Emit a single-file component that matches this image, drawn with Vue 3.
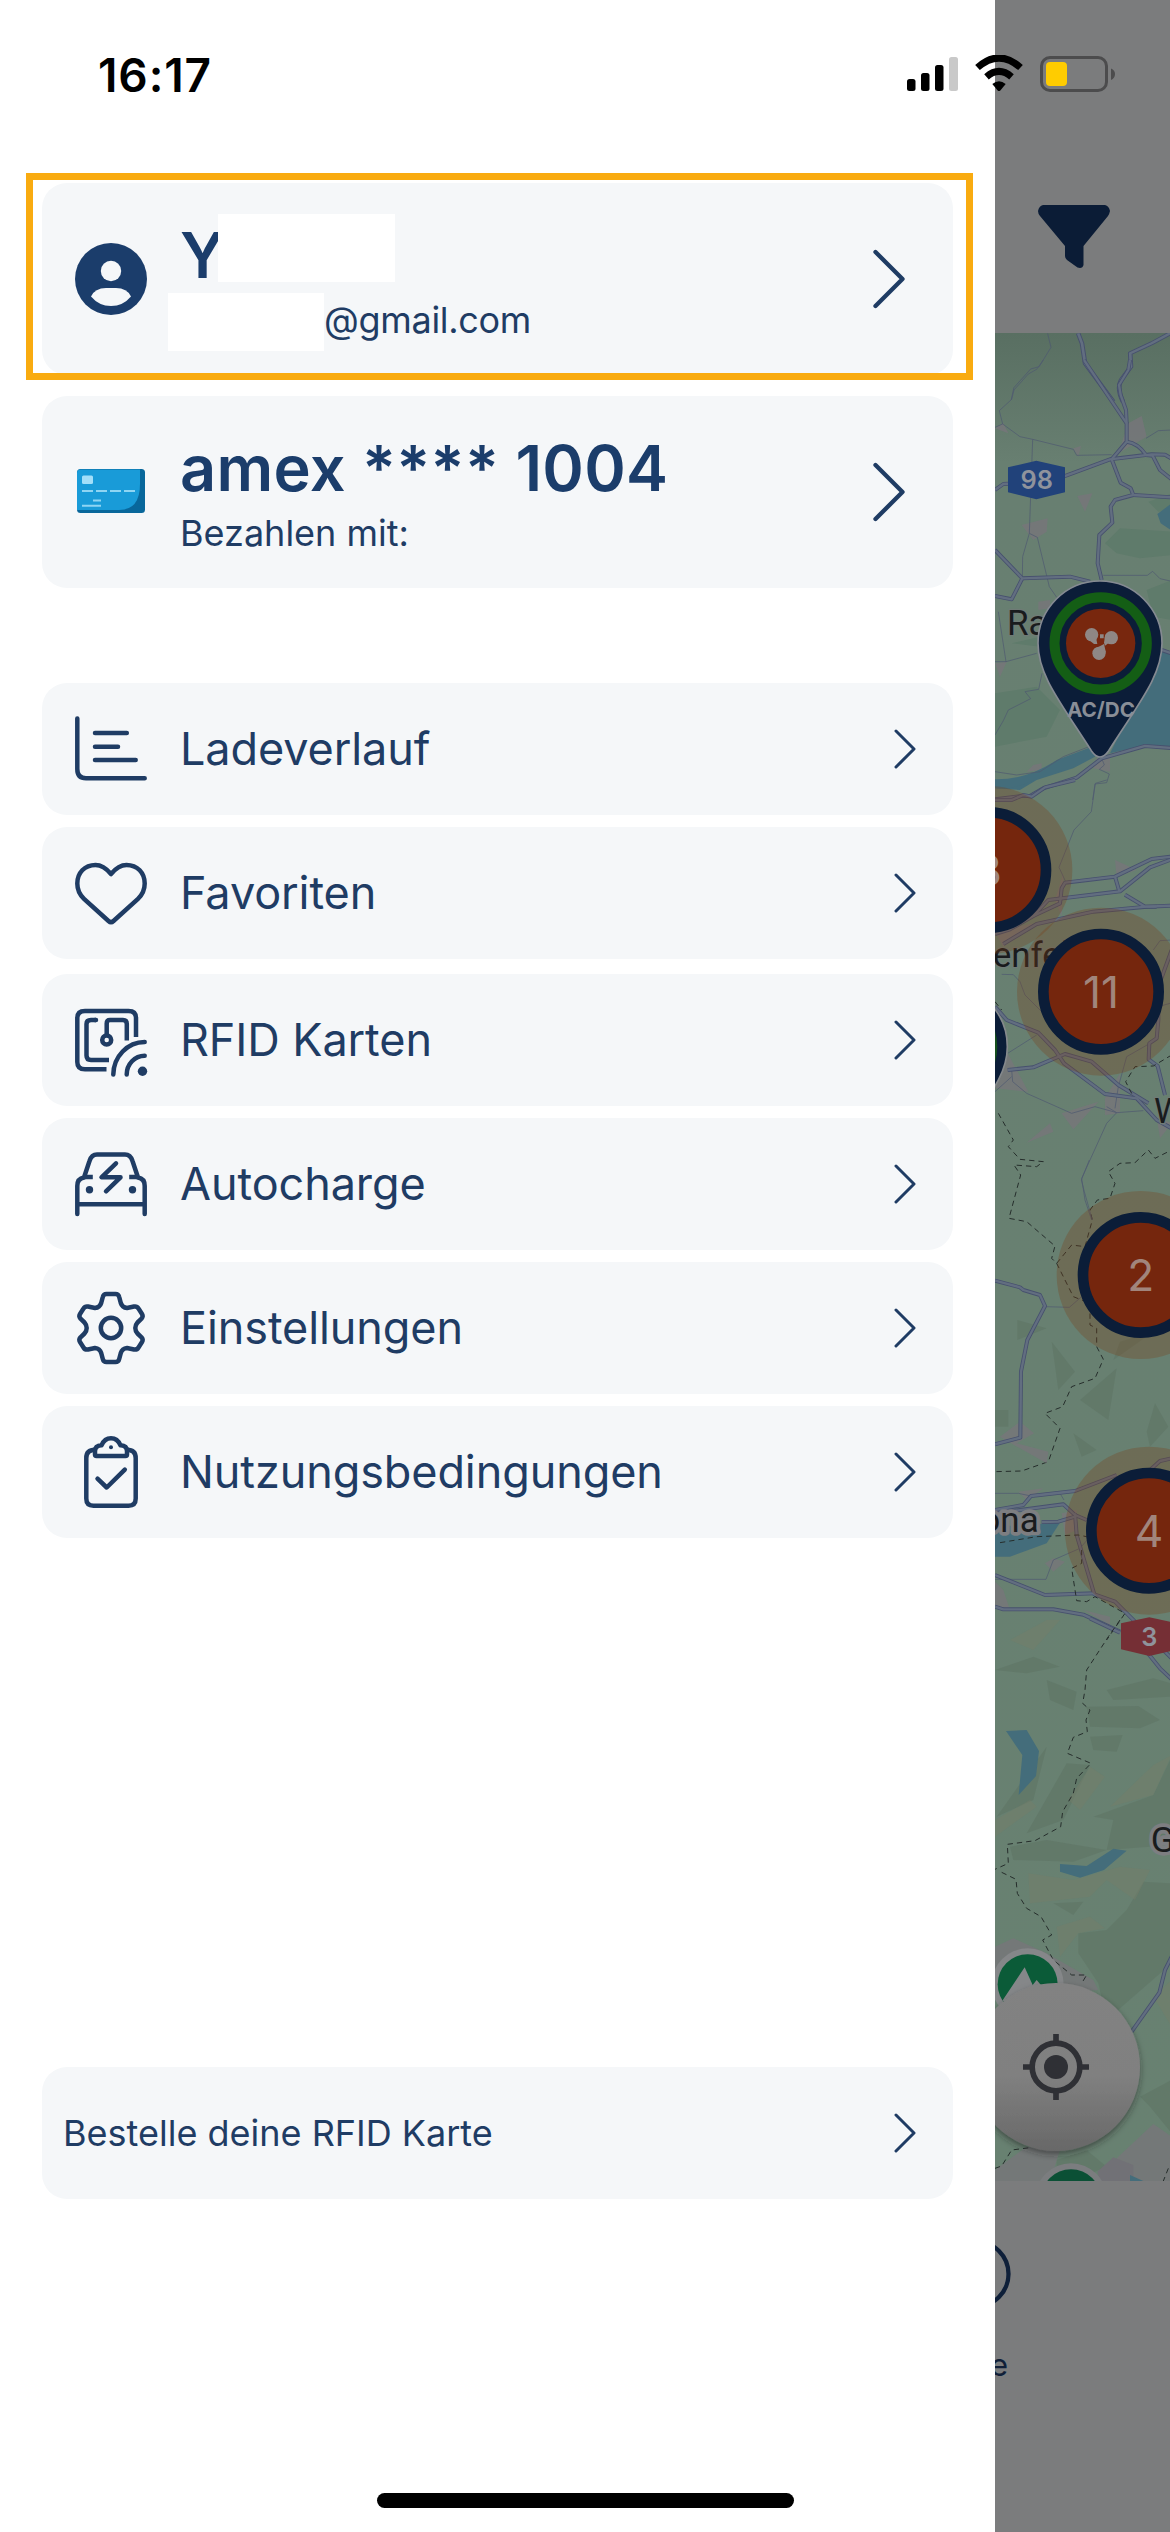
<script setup>
const menu = [
  { id: 'chart', label: 'Ladeverlauf' },
  { id: 'heart', label: 'Favoriten' },
  { id: 'rfid', label: 'RFID Karten' },
  { id: 'car', label: 'Autocharge' },
  { id: 'gear', label: 'Einstellungen' },
  { id: 'clipboard', label: 'Nutzungsbedingungen' },
]

const topRoads = [
  'M672 0 L800 190 L800 245 L755 298 L782 368 L812 385 L820 405 L765 420 L752 440 L757 488 L718 525 L713 610 L725 660',
  'M810 0 L805 30 L777 75 L782 105 L798 150 L800 190',
  'M405 390 L430 372 L500 368 L610 350 L750 298 L875 283 L915 284 L935 296',
  'M800 245 Q835 250 858 285 L878 287 L900 330 L935 358',
  'M820 405 L935 412',
  'M405 570 L487 655 L630 650 L690 665',
  'M487 655 L455 718 L405 708',
  'M905 870 L935 880',
  'M405 1318 L485 1308 L510 1308 L550 1285 L650 1253 L725 1195 L855 1158 L935 1164',
]
const topTracks = [
  'M550 0 L530 28 L505 42 L462 90 L455 118 L418 152 L428 192 L480 230 L518 238 L640 268 L650 286 L755 284',
  'M405 202 L428 192', 'M518 238 L508 520 L488 590 L487 655', 'M508 520 L532 532 L568 680 L590 712',
  'M858 235 L895 212 L935 210', 'M730 646 L862 646 L878 634 L900 656 L935 664',
  'M415 755 L438 905 L530 880', 'M405 905 L438 905', 'M546 940 L536 988 L495 995 L512 1016 L445 1050 L430 1082 L405 1125',
  'M405 1235 L470 1245 L540 1235 L610 1190 L700 1155', 'M725 1195 L733 1215 L718 1228 L748 1242 L740 1268 L705 1272 L698 1320',
]
const midRoads = [
  'M405 60 L455 60 L490 45 L515 50 L555 22 L645 0',
  'M405 462 L450 448 L520 408 L600 370 L605 325 L615 308 L765 290 L875 237 L935 230',
  'M430 492 L530 432 L700 395 L860 380 L935 377', 'M520 408 L565 360 L780 334 L870 262 L935 238',
  'M765 290 L778 334', 'M795 344 L855 380 L890 380', 'M405 680 L440 720 L535 758 L585 810 L612 850 L735 942 L830 955 L890 1020 L935 1045',
  'M443 870 L520 862 L615 822 L695 845 L775 915 L865 970', 'M935 510 L895 620 L895 720 L890 775 L868 790 L866 838 L893 858 L915 945',
]
const midTracks = [
  'M740 0 L706 10 L694 95 L642 150 L597 262 L617 305', 'M425 583 L460 584 L480 605 L495 645 L570 720',
  'M443 820 L530 765', 'M455 870 L458 905 L500 940 L635 1000 L705 980 L770 998 L850 992', 'M740 980 L770 998 L740 1030 L665 1195 L675 1260 L695 1320',
  'M405 935 L455 890', 'M935 480 L900 482 L880 510', 'M930 670 L895 680', 'M870 790 L800 830 L775 920 L765 985',
]
const lowRoads = [
  'M405 362 L480 382 L490 390 L540 405 L555 438 L502 540 L483 635 L481 833 L405 853',
  'M405 1050 L490 1035 L513 1008 L645 993 L770 945', 'M405 1060 L610 1033 L645 1065 L680 1080', 'M545 1086 L595 1085 L645 1070',
  'M645 1060 L650 1125 L703 1303 L765 1325 L825 1385', 'M405 1245 L555 1305 L703 1300',
  'M405 1340 L430 1348 L580 1348 L670 1364 L780 1415', 'M870 930 L900 903 L935 895',
]
const lowTracks = [
  'M555 440 L628 442 L665 410', 'M688 0 L664 60 L673 95 L697 180', 'M405 1000 L475 1000 L513 1008',
  'M405 1258 L558 1258 L580 1200 L660 1165 L690 1130', 'M600 1000 L612 1020',
]
const clusters = [
  { x: 385, y: 270, n: '8' },
  { x: 723, y: 635, n: '11' },
  { x: 842, y: 1485, n: '2' },
  { x: 867, y: 2252, n: '4' },
]
</script>

<template>
  <main class="screen">
    <aside class="drawer">
      <section class="cards">
        <div class="card tall account">
          <svg class="icon" viewBox="0 0 72 72">
            <circle cx="36" cy="36" r="36" fill="#1b3d6b" />
            <ellipse cx="36" cy="28" rx="10.2" ry="10.2" fill="#f5f7f9" />
            <path d="M16 53.5 Q20 45 31 45 H41 Q52 45 56 53.5 Q48 63 36 63 T16 53.5Z" fill="#f5f7f9" />
          </svg>
          <div class="lines">
            <strong class="title">Y<i class="mask"></i></strong>
            <span class="sub email"><i class="mask"></i>@gmail.com</span>
          </div>
          <svg class="chevron big" viewBox="0 0 32 60"><path d="M2.5 3 L29.5 30 L2.5 57" /></svg>
        </div>
        <div class="card tall">
          <svg class="icon" viewBox="0 0 72 72">
            <rect x="2" y="13" width="68" height="44" rx="3.5" fill="#08679b" />
            <path d="M5 13.5 H65 V28 Q65 54 44 54 H2 V17 Q2 13.500 5 13.500Z" fill="#199bd8" />
            <rect x="7" y="19.500" width="11" height="8.500" rx="1.500" fill="#a3dff9" />
            <path d="M7 35H18M21 35H32M35 35H46M49 35H60M18 44.500H26M7 49.700H26" stroke="#8fd5f3" stroke-width="2" />
          </svg>
          <div class="lines">
            <strong class="title amex">amex **** 1004</strong>
            <span class="sub">Bezahlen mit:</span>
          </div>
          <svg class="chevron big" viewBox="0 0 32 60"><path d="M2.5 3 L29.5 30 L2.5 57" /></svg>
        </div>
      </section>

      <nav class="menu">
        <a v-for="item in menu" :key="item.id" class="card" :class="item.id">
          <svg class="icon line" viewBox="0 0 72 72">
            <path v-if="item.id === 'chart'" d="M2.300 5.500V56Q2.300 65.300 11 65.300H69.700M20 20H51.800M20 33.700H43M20 47H60.700" />
            <path v-else-if="item.id === 'heart'" d="M36 17C31 11 26.500 8 20.500 8C9.500 8 2.300 16 2.300 26.500C2.300 34 5.500 38.500 9 41.800L33.500 64Q36 66.300 38.500 64L63 41.800C66.500 38.500 69.700 34 69.700 26.500C69.700 16 62.500 8 51.500 8C45.500 8 41 11 36 17Z" />
            <g v-else-if="item.id === 'rfid'" stroke-linecap="butt">
              <path d="M31.500 65.300H10Q2.300 65.300 2.300 58V14Q2.300 7 10 7H53.500Q61 7 61 14V33M34 56H16Q11.500 56 11.500 51.500V20Q11.500 16 16 16H21M31.700 31V19.500Q31.700 16 35 16H48Q51.800 16 51.800 20V36.500" />
              <circle cx="31.700" cy="36" r="4.500" />
              <path d="M20 16H21M69.700 38A31.500 33 0 0 0 38.300 70.500M69.700 51.800A18 18.700 0 0 0 51.700 70.500" stroke-linecap="round" />
              <circle class="dot" cx="67.500" cy="67.300" r="4.700" />
            </g>
            <g v-else-if="item.id === 'car'">
              <path d="M2.300 66V38Q2.300 30.500 9 29.500L14.500 13Q16.500 6.500 22 6.500H50Q55.500 6.500 57.500 13L63 29.500Q69.700 30.500 69.700 38V66M2.300 56.300H69.700" />
              <path d="M9 29H17.800M54.200 29H63" stroke-linecap="butt" />
              <path d="M41 15.300L26.500 29.300H45.500L31 43.300" />
              <circle class="dot" cx="14.500" cy="41.700" r="3.700" /><circle class="dot" cx="57.500" cy="41.700" r="3.700" />
            </g>
            <g v-else-if="item.id === 'gear'">
              <path d="M31.500 2H40.500Q43.500 2 44.200 5L45.800 11Q47.200 15.500 52 16L59 14.500Q62 14 63.500 16.500L67 22Q68.500 24.500 66.500 26.700L62.500 30.500Q60.300 33 60.300 36T62.500 41.500L66.500 45.300Q68.500 47.500 67 50L63.500 55.500Q62 58 59 57.500L52 56Q47.200 56.500 45.800 61L44.200 67Q43.500 70 40.500 70H31.500Q28.500 70 27.800 67L26.200 61Q24.800 56.500 20 56L13 57.500Q10 58 8.500 55.500L5 50Q3.500 47.500 5.500 45.300L9.500 41.500Q11.700 39 11.700 36T9.500 30.500L5.500 26.700Q3.500 24.500 5 22L8.500 16.500Q10 14 13 14.500L20 16Q24.800 15.500 26.200 11L27.800 5Q28.500 2 31.500 2Z" />
              <circle cx="36" cy="36" r="10.200" />
            </g>
            <g v-else>
              <path d="M20 13.700Q11.300 13.700 11.300 22V62.500Q11.300 69.700 18.500 69.700H53.500Q60.700 69.700 60.700 62.500V22Q60.700 13.700 52 13.700" />
              <path d="M20 18.500V15Q20 9.800 26.500 9.300Q29.500 2.300 36 2.300T45.500 9.300Q52 9.800 52 15V18.500Q52 20 50.500 20H21.500Q20 20 20 18.500ZM22.500 42.700L31.700 51.500L49.800 33.700" />
              <circle class="dot" cx="36" cy="11.300" r="2" />
            </g>
          </svg>
          <span class="label">{{ item.label }}</span>
          <svg class="chevron" viewBox="0 0 22 40"><path d="M2 2 L20 20 L2 38" /></svg>
        </a>
      </nav>

      <a class="card order">
        <span class="order-label">Bestelle deine RFID Karte</span>
        <svg class="chevron" viewBox="0 0 22 40"><path d="M2 2 L20 20 L2 38" /></svg>
      </a>
    </aside>

    <section class="backdrop">
      <header class="toolbar">
        <svg class="filter" viewBox="0 0 72 63"><path d="M5 0H67Q71 1 72 6Q71.500 8.500 70 11L45.500 41V60Q44.500 64 39.500 62.500L29 55Q27 53.500 27 51V41L2 11Q0 8.500 0 6Q1 1 5 0Z" fill="#0b1c36" /></svg>
      </header>

      <svg class="map" viewBox="995 333 175 1848">
        <defs>
          <linearGradient id="land" x1="0" y1="0" x2="0" y2="1">
            <stop offset="0" stop-color="#596f62" /><stop offset=".07" stop-color="#687f71" /><stop offset="1" stop-color="#688171" />
          </linearGradient>
          <linearGradient id="fab" x1="0" y1="0" x2="0" y2="1">
            <stop offset="0" stop-color="#828282" /><stop offset=".55" stop-color="#808080" /><stop offset="1" stop-color="#686868" />
          </linearGradient>
          <filter id="shade" x="-20%" y="-20%" width="140%" height="140%"><feDropShadow dx="0" dy="10" stdDeviation="9" flood-color="#222" flood-opacity=".5" /></filter>
        </defs>
        <rect x="995" y="333" width="175" height="1848" fill="url(#land)" />

        <g transform="translate(570 0) scale(.38265 .33333)">
          <path class="track" d="M1248 1000 L1257 1042 L1226 1100 L1204 1107 L1160 1163 L1153 1200" />
          <path class="road" d="M1328 1000 L1338 1030 L1346 1090 L1420 1205 M1568 1000 L1520 1030 L1464 1060 L1466 1100 L1440 1140 Q1428 1165 1445 1205" />
          <path class="road core" d="M1328 1000 L1338 1030 L1346 1090 L1420 1205 M1568 1000 L1520 1030 L1464 1060 L1466 1100 L1440 1140 Q1428 1165 1445 1205" />
        </g>

        <!-- northern area -->
        <g transform="translate(860 360) scale(.33333)">
          <path class="wood" d="M735 550L780 505L935 515V585L840 595L770 580ZM865 425L935 400V450L895 455ZM405 1000L530 980L600 1050L560 1130L405 1160ZM860 690L935 660V780L880 770ZM455 850L540 830V860Z" />
          <path class="town" d="M805 190L845 168L860 230L775 280ZM640 265L663 258L655 290ZM652 408L697 400L675 455ZM485 495L563 475L560 515L520 540ZM405 205L430 190L445 220ZM405 910L440 905L420 950ZM710 1195L750 1195L750 1235L700 1225ZM520 1215L545 1210V1230L500 1235ZM535 725L570 720V745L535 750Z" />
          <path class="water" d="M935 430L892 462L902 490L935 512ZM905 870L935 885V1160L860 1155L750 1180ZM405 1258Q500 1260 590 1200L710 1155L705 1190L640 1225L530 1260L480 1290L405 1285Z" />
          <path v-for="d in topTracks" :key="d" class="track" :d="d" />
          <path v-for="d in topRoads" :key="d" class="road" :d="d" />
          <path v-for="d in topRoads" :key="'c' + d" class="road core" :d="d" />
          <path d="M444 322L529 302L615 322V397L529 418L444 397Z" fill="#21427a" />
          <text class="badge" x="530" y="388" font-size="76">98</text>
          <text class="place" x="441" y="825" font-size="105">Radolf</text>
        </g>

        <!-- central area -->
        <g transform="translate(860 780) scale(.33333)">
          <path class="water" d="M405 0H520Q470 28 405 25Z" />
          <path class="town" d="M765 240L830 270L770 290ZM500 1088L570 1030L580 1055ZM605 1000L715 965L640 1048ZM735 955L780 880V1000L735 1005ZM443 820L505 935L405 925ZM890 1010L935 1030L900 1075ZM405 455L520 430L430 500ZM585 360L610 280L605 410Z" />
          <path v-for="d in midTracks" :key="d" class="track" :d="d" />
          <path v-for="d in midRoads" :key="d" class="road" :d="d" />
          <path v-for="d in midRoads" :key="'c' + d" class="road core" :d="d" />
          <path class="border" d="M405 665L425 690M415 1000L460 1080L445 1100L480 1138L550 1145L530 1160L462 1155L482 1185L447 1315L500 1325L585 1398L575 1435L590 1450L635 1395L675 1400L697 1320L690 1290L712 1260L750 1255L765 1210L745 1175L780 1150L825 1148L865 1110L885 1135L935 1110M590 1450L640 1550L690 1570L690 1635L710 1645V1700L730 1738L705 1795L635 1820L608 1880L555 1900L600 1945L565 2045L485 2073L405 2075M935 825L880 858L825 860L797 905L820 950" />
          <text class="place" x="398" y="562" font-size="105">enfeld</text>
          <text class="place" x="882" y="1030" font-size="105">W</text>
        </g>

        <!-- foothills -->
        <g transform="translate(860 1160) scale(.33333)">
          <path class="ridge" d="M575 545L645 635L595 690ZM472 480L560 505L472 540ZM660 720L770 625L745 780ZM640 820L710 870L665 890ZM860 815L885 730L925 800L870 860ZM780 545L880 515L760 600ZM405 750H445V800H405Z" />
          <path class="town" d="M420 830L480 785L522 820L470 850L565 875L560 910L450 848ZM475 995L550 985L500 1020ZM605 1060L650 1050V1110L615 1125ZM555 1210L580 1195L615 1205L580 1235ZM405 1265L430 1290L450 1350L405 1345ZM670 1350L750 1370V1395Z" />
          <path class="water" d="M405 1100L600 1088L560 1150L450 1190H405Z" />
          <path v-for="d in lowTracks" :key="d" class="track" :d="d" />
          <path v-for="d in lowRoads" :key="d" class="road" :d="d" />
          <path v-for="d in lowRoads" :key="'c' + d" class="road core" :d="d" />
          <path class="border" d="M420 1148L530 1130L655 1125L680 1130M665 1170L665 1210L635 1225L650 1322L680 1325L705 1310L795 1360L740 1440" />
          <text class="place halo" x="536" y="1117" font-size="105" text-anchor="end">Altona</text>
        </g>

        <!-- mountains -->
        <g transform="translate(860 1620) scale(.33333)">
          <path class="ridge" d="M560 180L650 215L640 270L570 240ZM405 150L520 110L600 140L500 160ZM680 260L835 258L900 300L840 325L690 320ZM690 350L788 345L770 395L700 390ZM740 210L880 175L935 190V230L760 240ZM450 680L560 660L740 690L640 725L460 720ZM700 590L880 525L935 410V640L870 680L740 690L760 600ZM850 785L935 790V1030L740 1200L715 1090L655 1000V940L740 930L800 870ZM500 640L620 430L690 435L610 600ZM410 590L560 380L520 540ZM580 850L670 845L640 885Z" />
          <path class="sand" d="M625 540L690 440L735 470L660 570ZM750 560L880 435L935 405L880 525ZM505 760L640 780L780 740L870 750L825 840L740 780L690 830L510 850ZM590 920L690 890L735 925L655 940L600 1010ZM405 600L510 540L530 560L405 650ZM880 1130L935 1080V1220ZM450 60L560 0H600L520 90Z" />
          <path class="town" d="M405 980L460 955L560 1000L700 1080L715 1110L600 1120L405 1050Z" />
          <path class="water" d="M438 333L500 330L537 393L528 468L476 525L487 405ZM600 732L680 738L760 686L800 692L732 750L660 773L600 755Z" />
          <path class="road" d="M690 -5L780 38M860 95L900 145L935 178M935 1010L915 1050L898 1118L815 1235M880 60L935 115" />
          <path class="road core" d="M690 -5L780 38M860 95L900 145L935 178M935 1010L915 1050L898 1118L815 1235M880 60L935 115" />
          <path class="border" d="M780 0L745 50L680 150L675 210L668 250L690 270L678 300L682 335L640 352L622 400L693 430L650 475L640 520L608 575L602 620L525 662L442 673L445 730L405 748M425 757L468 778L472 820L500 865L543 890L575 945L548 960L580 1020L635 1065H680L665 1090" />
          <path d="M783 10L868 -8L953 10V88L868 108L783 88Z" fill="#752f35" />
          <text class="badge" x="868" y="78" font-size="76">3</text>
          <text class="place halo" x="872" y="695" font-size="107">G</text>
        </g>

        <!-- southern edge -->
        <g transform="translate(860 1920) scale(.33333)">
          <path class="ridge" d="M840 530L935 480V640L870 560ZM590 720L680 690L740 740L640 783H590Z" />
          <path class="town" d="M770 715L880 612L935 650V783H820ZM405 783V750L500 680L600 690L570 783Z" />
          <path d="M712 755L760 712L820 735V783H720Z" fill="#717176" />
          <path class="water" d="M810 765L850 783H810Z" />
          <path class="border" d="M405 745L425 738L455 690L510 683M925 745L910 783" />
          <circle cx="503" cy="193" r="108" fill="#858789" /><circle cx="503" cy="193" r="90" fill="#0b5b38" />
          <path d="M425 245L494 142L518 195L530 180L560 215Z" fill="#858789" />
          <circle cx="633" cy="838" r="108" fill="#7b7d7f" /><circle cx="633" cy="838" r="90" fill="#0b5035" />
          <circle cx="588" cy="441" r="252" fill="url(#fab)" filter="url(#shade)" />
          <g fill="none" stroke="#2f3035" stroke-width="17">
            <circle cx="588" cy="441" r="71.500" /><path d="M588 342V370M588 512V540M489 441H518M658 441H687" />
          </g>
          <circle cx="588" cy="441" r="36" fill="#2f3035" />
        </g>

        <!-- charging stations -->
        <g transform="translate(860 780) scale(.33333)">
          <path d="M68 800a187 187 0 0 1 374 0c0 90-60 150-174 325l-13 15C200 1060 68 890 68 800Z" fill="#0b1d38" stroke="#85898c" stroke-width="5" />
          <circle cx="255" cy="800" r="138" fill="none" stroke="#15501d" stroke-width="38" />
          <g v-for="c in clusters" :key="c.n">
            <circle :cx="c.x" :cy="c.y" r="252" fill="rgba(122,62,22,.3)" />
            <circle :cx="c.x" :cy="c.y" r="173" fill="#75260d" stroke="#0b1d38" stroke-width="32" />
            <text class="count" :x="c.x" :y="c.y + 49">{{ c.n }}</text>
          </g>
        </g>
        <g transform="translate(860 360) scale(.33333)">
          <path d="M534 850a186 187 0 0 1 372 0c0 95-66 175-160 322q-26 38-52 0C600 1025 534 945 534 850Z" fill="#0b1d38" stroke="#858a92" stroke-width="5" />
          <circle cx="722" cy="850" r="138.500" fill="none" stroke="#145e15" stroke-width="30" />
          <circle cx="722" cy="850" r="104" fill="#78270e" />
          <g fill="#8f8785"><circle cx="695" cy="824" r="20" /><circle cx="754" cy="833" r="20" /><circle cx="717" cy="880" r="20" /><path d="M684 838L704 812L712 852H702ZM736 822L745 850L735 857L732 848ZM702 868L732 852L738 878ZM720 823H731V835H720Z" /></g>
          <text class="acdc" x="723" y="1071">AC/DC</text>
        </g>
      </svg>

      <footer class="tabs">
        <svg class="tab-icon" viewBox="0 0 31 70"><circle cx="-19" cy="35" r="32.500" fill="none" stroke="#0e1f39" stroke-width="4.300" /></svg>
        <span class="tab-label">e</span>
      </footer>
    </section>

    <div class="highlight"></div>

    <div class="status">
      <span class="time">16:17</span>
      <svg class="signals" viewBox="0 0 210 40">
        <rect x="1" y="24" width="8.500" height="12" rx="2.500" /><rect x="15" y="18" width="8.500" height="18" rx="2.500" /><rect x="29" y="10" width="8.500" height="26" rx="2.500" /><rect x="43" y="2" width="9" height="34" rx="2.500" fill="#c9c9c9" />
        <g fill="none" stroke="#000" stroke-width="7">
          <path d="M71.500 12.500Q93 -6.500 114.500 12.500" /><path d="M80.500 21.800Q93 11 105.500 21.800" />
        </g>
        <path d="M86.300 29Q93 23.500 99.700 29L94.300 35.500Q93 36.500 91.700 35.500Z" />
        <rect x="135.500" y="2.500" width="65" height="33" rx="8.500" fill="none" stroke="#4c4c4d" stroke-width="3" />
        <rect x="140" y="7" width="21" height="24" rx="4" fill="#fc0" />
        <path d="M205 13.500Q209 15 209 19T205 25Z" fill="#4c4c4d" />
      </svg>
    </div>
    <div class="home"></div>
  </main>
</template>

<style>
body { margin: 0; background: #fff; }
</style>

<style scoped>
.screen { position: relative; display: grid; grid-template-columns: 995px 175px; width: 1170px; height: 2532px; overflow: hidden; font-family: Inter, "Liberation Sans", sans-serif; color: #1f3c64; background: #fff; }
.drawer { display: flex; flex-direction: column; box-sizing: border-box; padding: 183px 42px 333px; background: #fff; }
.cards { display: flex; flex-direction: column; gap: 21px; margin-bottom: 95px; }
.menu { display: flex; flex-direction: column; gap: 12px; }
.card { display: flex; align-items: center; box-sizing: border-box; height: 132px; padding: 0 37px 0 33px; border-radius: 25px; background: #f5f7f9; }
.card.tall { height: 192px; padding-right: 48px; }
.card.rfid { margin-top: 3px; }
.icon { flex: none; width: 72px; height: 72px; margin-right: 33px; overflow: visible; }
.line { fill: none; stroke: #1f3c64; stroke-width: 4.5; stroke-linecap: round; stroke-linejoin: round; }
.line .dot { fill: #1f3c64; stroke: none; }
.lines { display: flex; flex-direction: column; align-items: flex-start; gap: 5px; }
.title { position: relative; font-size: 63px; line-height: 76px; font-weight: 600; color: #1b3d6b; }
.amex { letter-spacing: .3px; }
.sub { position: relative; font-size: 36px; line-height: 44px; white-space: nowrap; }
.email { padding-left: 144px; letter-spacing: -.3px; }
.title .mask { position: absolute; left: 38px; top: -3px; width: 177px; height: 68px; background: #fff; }
.email .mask { position: absolute; left: -12px; top: -5px; width: 156px; height: 58px; background: #fff; }
.label { font-size: 45px; line-height: 56px; letter-spacing: -.1px; }
.chevron { flex: none; width: 22px; height: 40px; margin-left: auto; fill: none; stroke: #1f3c64; stroke-width: 3; stroke-linecap: round; stroke-linejoin: round; }
.chevron.big { width: 32px; height: 60px; stroke-width: 4.3; }
.order { margin-top: auto; padding-left: 21px; }
.order-label { font-size: 36px; line-height: 44px; }

.backdrop { display: flex; flex-direction: column; overflow: hidden; background: #7b7c7d; }
.toolbar { flex: none; box-sizing: border-box; height: 333px; padding: 205px 0 0 43px; }
.filter { display: block; width: 72px; height: 63px; }
.map { display: block; flex: none; width: 175px; height: 1848px; font-family: Inter, "Liberation Sans", sans-serif; }
.road { fill: none; stroke: #47516e; stroke-width: 12; stroke-linejoin: round; }
.road.core { stroke: #626e80; stroke-width: 7; }
.track { fill: none; stroke: #4f5b70; stroke-width: 2.2; }
.border { fill: none; stroke: #252d2b; stroke-width: 3; stroke-dasharray: 16 12; }
.wood { fill: #5f7b6b; }
.ridge { fill: #596f60; opacity: .4; }
.sand { fill: #747e6a; opacity: .5; }
.town { fill: #77757a; opacity: .8; }
.water { fill: #446d7b; }
.place { font-family: Roboto, "Liberation Sans", sans-serif; fill: #191b1d; stroke: #6f7b76; stroke-width: 8; paint-order: stroke; }
.place.halo { stroke: #7d7e81; stroke-width: 22; stroke-linejoin: round; }
.badge { fill: #8f939c; font-weight: 600; text-anchor: middle; }
.count { fill: #a1857c; font-size: 133px; font-weight: 400; text-anchor: middle; }
.acdc { fill: #898e97; font-size: 62px; font-weight: 700; text-anchor: middle; }
.tabs { display: flex; flex-direction: column; align-items: flex-start; padding-top: 58px; }
.tab-icon { width: 31px; height: 70px; }
.tab-label { margin: 36px 0 0 -5px; font-size: 31px; line-height: 40px; color: #101f38; }

.highlight { position: absolute; left: 26px; top: 173px; box-sizing: border-box; width: 947px; height: 207px; border: 7px solid #f9ab10; }
.status { position: absolute; left: 0; top: 0; display: flex; justify-content: space-between; align-items: center; box-sizing: border-box; width: 1170px; height: 150px; padding: 0 54px 0 98px; color: #000; }
.time { font-size: 46px; font-weight: 600; letter-spacing: .9px; }
.signals { width: 210px; height: 40px; }
.home { position: absolute; left: 377px; bottom: 24px; width: 417px; height: 15px; border-radius: 8px; background: #000; }
</style>
